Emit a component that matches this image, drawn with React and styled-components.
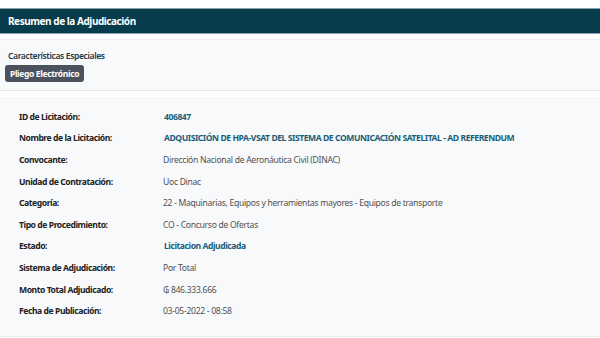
import React from "react";
import styled, { createGlobalStyle } from "styled-components";

const GlobalStyle = createGlobalStyle`
  html, body {
    margin: 0;
    padding: 0;
    background: #ffffff;
    font-family: "Noto Sans", "Open Sans", sans-serif;
  }
`;

const Page = styled.div`
  width: 600px;
  padding-top: 8px;
`;

const Header = styled.div`
  height: 24px;
  background: #073c4d;
  border-top: 1px solid #8aa3ab;
  border-bottom: 1px solid #8aa3ab;
  display: flex;
  align-items: center;
  padding-left: 8px;
  color: #ffffff;
  font-weight: 700;
  font-size: 10px;
  letter-spacing: -0.45px;
`;

const Panel = styled.div`
  background: #f8f9fb;
  border-top: 1px solid #eceef1;
  border-bottom: 1px solid #e6e8eb;
  margin-top: ${(p) => p.$gap}px;
`;

const Features = styled.div`
  padding: 10px 5px 8px;
  display: flex;
  flex-direction: column;
  align-items: flex-start;
  gap: 4px;
`;

const SubTitle = styled.div`
  font-size: 8.5px;
  font-weight: 600;
  letter-spacing: -0.35px;
  color: #1c3845;
  padding-left: 3px;
`;

const Badge = styled.span`
  background: #4b525d;
  color: #ffffff;
  font-size: 8.5px;
  font-weight: 700;
  letter-spacing: -0.35px;
  padding: 3px 5px;
  border-radius: 3px;
  line-height: 11px;
`;

const Table = styled.div`
  padding: 7px 0 14px 19px;
  display: grid;
  grid-template-columns: 144px 1fr;
  grid-auto-rows: 21.6px;
  align-items: center;
  font-size: 8.6px;
`;

const Label = styled.div`
  font-weight: 700;
  letter-spacing: -0.45px;
  color: #222222;
`;

const Value = styled.div`
  color: ${(p) => (p.$link ? "#1b5e78" : "#505050")};
  font-weight: ${(p) => (p.$link ? 700 : 400)};
  letter-spacing: ${(p) => (p.$link ? -0.45 : -0.3)}px;
  padding-left: ${(p) => (p.$link ? 1 : 0)}px;
`;

const rows = [
  ["ID de Licitación:", "406847", true],
  ["Nombre de la Licitación:", "ADQUISICIÓN DE HPA-VSAT DEL SISTEMA DE COMUNICACIÓN SATELITAL - AD REFERENDUM", true],
  ["Convocante:", "Dirección Nacional de Aeronáutica Civil (DINAC)"],
  ["Unidad de Contratación:", "Uoc Dinac"],
  ["Categoría:", "22 - Maquinarias, Equipos y herramientas mayores - Equipos de transporte"],
  ["Tipo de Procedimiento:", "CO - Concurso de Ofertas"],
  ["Estado:", "Licitacion Adjudicada", true],
  ["Sistema de Adjudicación:", "Por Total"],
  ["Monto Total Adjudicado:", "₲ 846.333.666"],
  ["Fecha de Publicación:", "03-05-2022 - 08:58"],
];

export default function App() {
  return (
    <Page>
      <GlobalStyle />
      <Header>Resumen de la Adjudicación</Header>
      <Panel $gap={5}>
        <Features>
          <SubTitle>Características Especiales</SubTitle>
          <Badge>Pliego Electrónico</Badge>
        </Features>
      </Panel>
      <Panel $gap={7}>
        <Table>
          {rows.map(([label, value, link]) => (
            <React.Fragment key={label}>
              <Label>{label}</Label>
              <Value $link={link}>{value}</Value>
            </React.Fragment>
          ))}
        </Table>
      </Panel>
    </Page>
  );
}
